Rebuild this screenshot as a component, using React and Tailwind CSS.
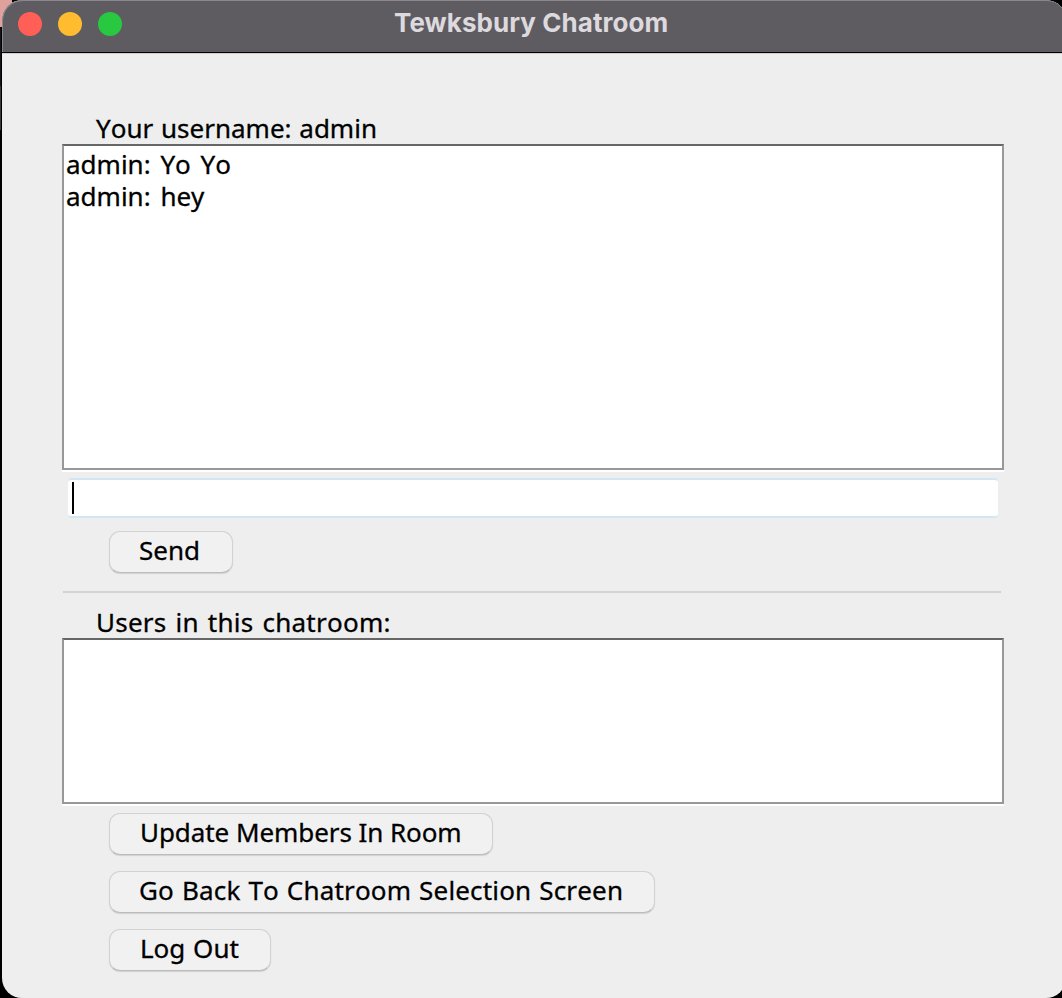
const FONT = "font-['Noto_Sans',sans-serif] text-[26px] leading-[32px] text-black whitespace-pre [font-kerning:none] [-webkit-text-stroke:0.3px_black]";

function SwingButton({ className, textClass, children }) {
  return (
    <button
      className={`flex h-[42px] items-center rounded-[11px] border border-[#d2d2d2] border-b-[#bcbcbc] bg-[#f1f1f1] pl-[29px] text-left shadow-[0_1px_1px_rgba(0,0,0,0.12)] ${className}`}
    >
      <span className={`${FONT} -mt-[5px] ${textClass}`}>{children}</span>
    </button>
  );
}

function Pane({ className, children }) {
  return (
    <div
      className={`ml-[60px] w-[942px] border-2 border-[#989898] border-t-[#666666] bg-white shadow-[0_2px_0_#ffffff] ${className}`}
    >
      {children}
    </div>
  );
}

export default function App() {
  return (
    <div className="relative h-[998px] w-[1062px] overflow-hidden bg-black">
      <div className="absolute left-0 top-0 h-[27px] w-[12px] bg-[#e0a09c]" />
      <div className="absolute left-0 top-[28px] h-[58px] w-px bg-[#14141c]" />
      <div className="absolute left-0 top-[86px] h-[44px] w-px bg-[#3a3a3c]" />
      <div className="relative ml-[2px] flex h-[998px] w-[1064px] flex-col overflow-hidden rounded-[20px] bg-[#eeeeee]">
        <header className="relative flex h-[53px] shrink-0 items-start rounded-t-[20px] border-b border-black bg-[#5f5c61] shadow-[inset_1px_1px_0_#89878b]">
          <div className="ml-[16px] mt-[12px] flex gap-[16px]">
            <span className="h-6 w-6 rounded-full bg-[#ff5f57]" />
            <span className="h-6 w-6 rounded-full bg-[#febc2e]" />
            <span className="h-6 w-6 rounded-full bg-[#28c840]" />
          </div>
          <h1 className="ml-[272px] mt-[7px] whitespace-nowrap font-['Inter',sans-serif] text-[26px] font-bold leading-[32px] tracking-[0.06px] text-[#dcdade]">
            Tewksbury Chatroom
          </h1>
        </header>
        <main className="flex flex-col border-t border-[#cfcfcf] pt-[58px]">
          <p className={`${FONT} ml-[94px] h-[32px] [word-spacing:1px]`}>Your username: admin</p>
          <Pane className="h-[326px] pl-[2px] pt-[2px]">
            <p className={`${FONT} [word-spacing:3px]`}>admin: Yo Yo</p>
            <p className={`${FONT} [word-spacing:3px]`}>admin: hey</p>
          </Pane>
          <div className="ml-[66px] mt-[8px] flex h-[40px] w-[930px] items-center rounded-[4px] border-y-2 border-[#d3e7f2] bg-white pl-[4px]">
            <span className="h-[32px] w-[2px] bg-black" />
          </div>
          <SwingButton className="ml-[107px] mt-[13px] w-[124px]">Send</SwingButton>
          <div className="ml-[61px] mt-[18px] h-[2px] w-[938px] bg-[#d3d3d3]" />
          <p className={`${FONT} ml-[94px] mt-[13px] h-[32px] tracking-[0.25px] [word-spacing:2px]`}>Users in this chatroom:</p>
          <Pane className="h-[166px]" />
          <SwingButton className="ml-[107px] mt-[9px] w-[384px]" textClass="ml-px tracking-[-0.07px]">Update Members In Room</SwingButton>
          <SwingButton className="ml-[107px] mt-[16px] w-[546px]" textClass="tracking-[0.17px] [word-spacing:1px]">Go Back To Chatroom Selection Screen</SwingButton>
          <SwingButton className="ml-[107px] mt-[16px] w-[162px]" textClass="ml-px [word-spacing:1px]">Log Out</SwingButton>
        </main>
      </div>
    </div>
  );
}
